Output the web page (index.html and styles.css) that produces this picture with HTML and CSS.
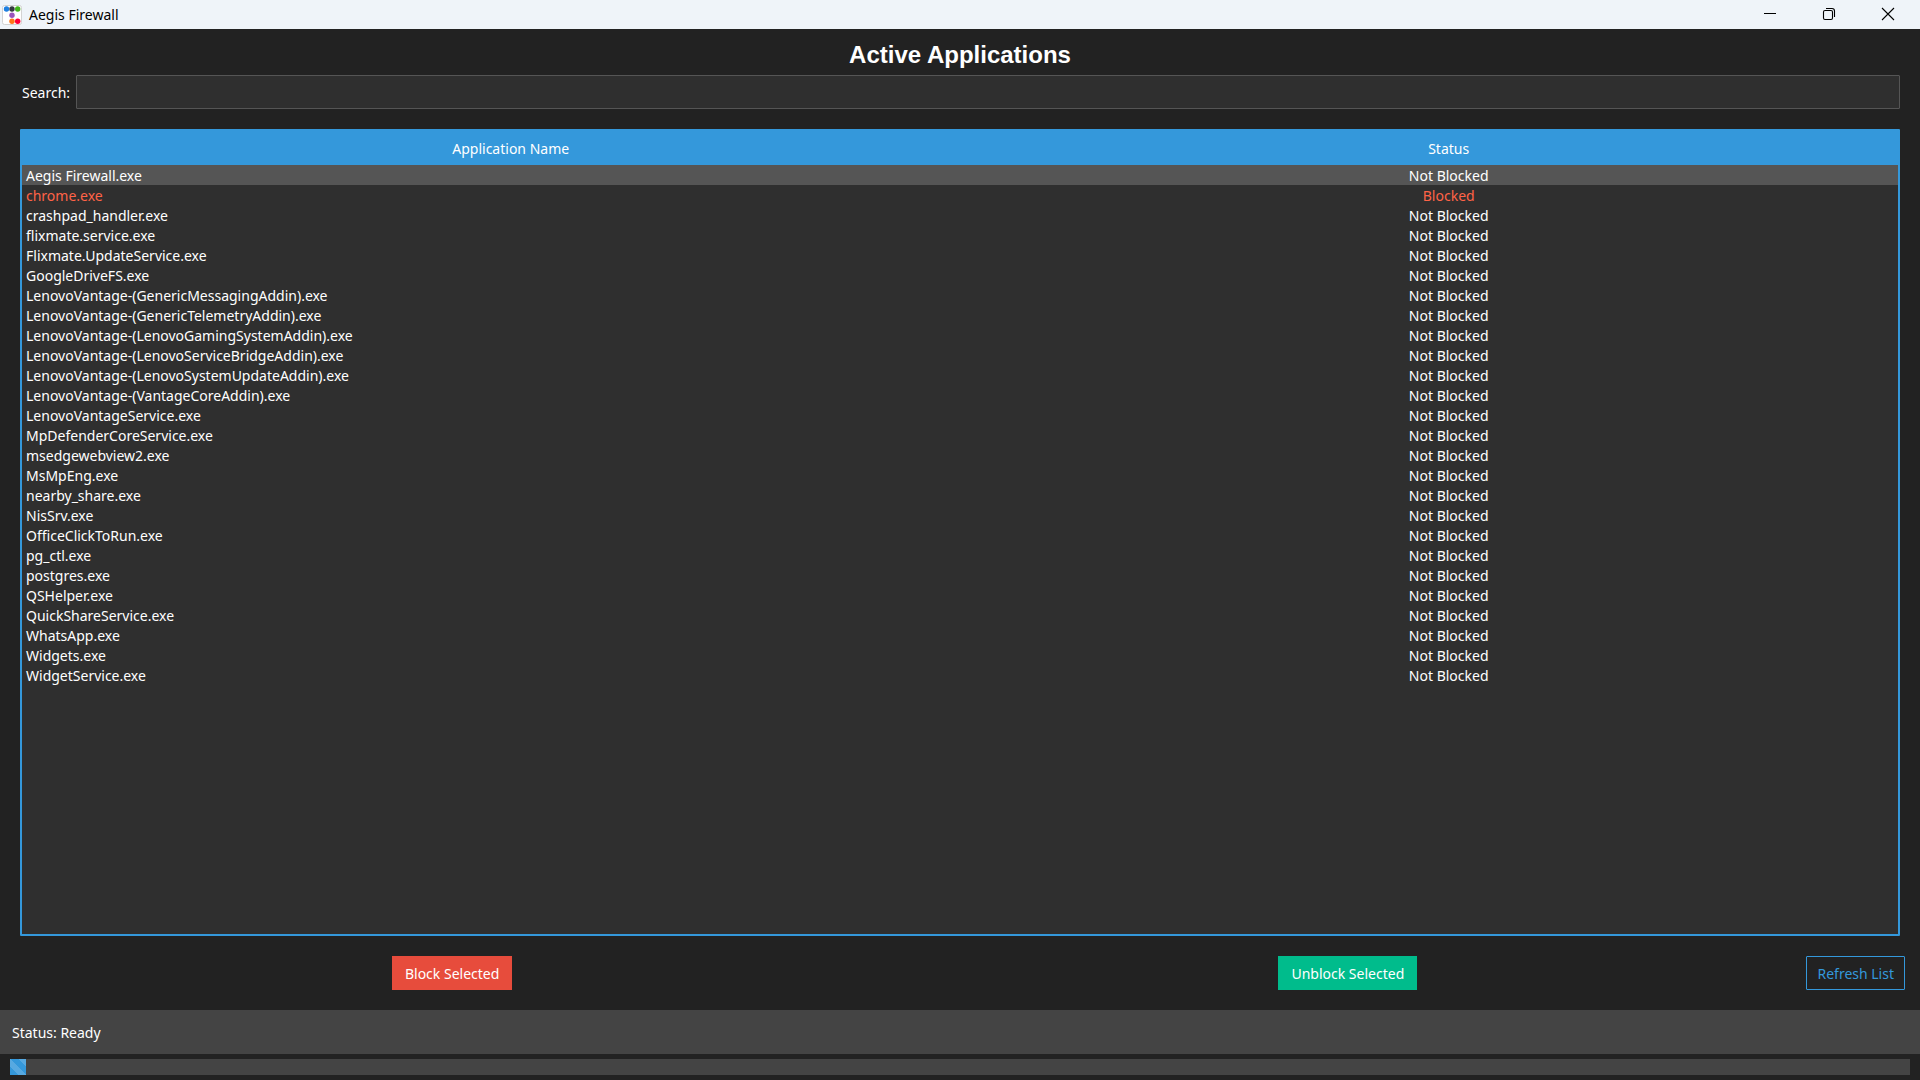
FILE: index.html
```html
<!DOCTYPE html>
<html lang="en">
<head>
<meta charset="utf-8">
<title>Aegis Firewall</title>
<link rel="stylesheet" href="styles.css">
</head>
<body>
<header class="titlebar">
  <svg class="app-icon" width="20" height="20" viewBox="0 0 20 20" aria-hidden="true">
    <rect x="0.5" y="0.5" width="19" height="19" rx="2" fill="#fff" stroke="#d3d3d3"/>
    <circle cx="4.5" cy="4" r="2.7" fill="#1e7fe0"/>
    <circle cx="10" cy="4" r="2.7" fill="#343a40"/>
    <circle cx="15.7" cy="4" r="2.7" fill="#3fb618"/>
    <circle cx="10" cy="10.2" r="2.7" fill="#9954bb"/>
    <circle cx="10" cy="16.3" r="2.7" fill="#ff7518"/>
    <circle cx="15.7" cy="16.3" r="2.7" fill="#ff0039"/>
  </svg>
  <span class="app-name">Aegis Firewall</span>
  <div class="window-controls">
    <button class="window-button" type="button" aria-label="Minimize">
      <svg width="14" height="14" viewBox="0 0 14 14"><path d="M1 6.5h12" stroke="#000" fill="none"/></svg>
    </button>
    <button class="window-button" type="button" aria-label="Restore">
      <svg width="14" height="14" viewBox="0 0 14 14"><g stroke="#000" stroke-width="1.1" fill="none"><rect x="1.5" y="3.5" width="9" height="9" rx="1.5"/><path d="M4 1.5h6a2.5 2.5 0 0 1 2.5 2.5v6"/></g></svg>
    </button>
    <button class="window-button" type="button" aria-label="Close">
      <svg width="14" height="14" viewBox="0 0 14 14"><path d="M1 1l12 12M13 1L1 13" stroke="#000" stroke-width="1.1" fill="none"/></svg>
    </button>
  </div>
</header>
<main class="content">
  <h1 class="title">Active Applications</h1>
  <div class="search">
    <label class="search-label" for="search">Search:</label>
    <input class="search-input" id="search" type="text">
  </div>
  <div class="list">
    <table class="apps">
      <colgroup><col class="col-name"><col class="col-status"></colgroup>
      <thead><tr><th>Application Name</th><th>Status</th></tr></thead>
      <tbody>
        <tr class="selected"><td>Aegis Firewall.exe</td><td>Not Blocked</td></tr>
        <tr class="blocked"><td>chrome.exe</td><td>Blocked</td></tr>
        <tr><td>crashpad_handler.exe</td><td>Not Blocked</td></tr>
        <tr><td>flixmate.service.exe</td><td>Not Blocked</td></tr>
        <tr><td>Flixmate.UpdateService.exe</td><td>Not Blocked</td></tr>
        <tr><td>GoogleDriveFS.exe</td><td>Not Blocked</td></tr>
        <tr><td>LenovoVantage-(GenericMessagingAddin).exe</td><td>Not Blocked</td></tr>
        <tr><td>LenovoVantage-(GenericTelemetryAddin).exe</td><td>Not Blocked</td></tr>
        <tr><td>LenovoVantage-(LenovoGamingSystemAddin).exe</td><td>Not Blocked</td></tr>
        <tr><td>LenovoVantage-(LenovoServiceBridgeAddin).exe</td><td>Not Blocked</td></tr>
        <tr><td>LenovoVantage-(LenovoSystemUpdateAddin).exe</td><td>Not Blocked</td></tr>
        <tr><td>LenovoVantage-(VantageCoreAddin).exe</td><td>Not Blocked</td></tr>
        <tr><td>LenovoVantageService.exe</td><td>Not Blocked</td></tr>
        <tr><td>MpDefenderCoreService.exe</td><td>Not Blocked</td></tr>
        <tr><td>msedgewebview2.exe</td><td>Not Blocked</td></tr>
        <tr><td>MsMpEng.exe</td><td>Not Blocked</td></tr>
        <tr><td>nearby_share.exe</td><td>Not Blocked</td></tr>
        <tr><td>NisSrv.exe</td><td>Not Blocked</td></tr>
        <tr><td>OfficeClickToRun.exe</td><td>Not Blocked</td></tr>
        <tr><td>pg_ctl.exe</td><td>Not Blocked</td></tr>
        <tr><td>postgres.exe</td><td>Not Blocked</td></tr>
        <tr><td>QSHelper.exe</td><td>Not Blocked</td></tr>
        <tr><td>QuickShareService.exe</td><td>Not Blocked</td></tr>
        <tr><td>WhatsApp.exe</td><td>Not Blocked</td></tr>
        <tr><td>Widgets.exe</td><td>Not Blocked</td></tr>
        <tr><td>WidgetService.exe</td><td>Not Blocked</td></tr>
      </tbody>
    </table>
  </div>
</main>
<div class="actions">
  <button class="button danger" type="button">Block Selected</button>
  <button class="button success" type="button">Unblock Selected</button>
  <button class="button outline" type="button">Refresh List</button>
</div>
<footer>
  <div class="status">Status: Ready</div>
  <div class="progress" role="progressbar" aria-label="Activity"><div class="progress-chunk"></div></div>
</footer>
</body>
</html>
```
FILE: styles.css
```css
* {
  box-sizing: border-box;
}

body {
  margin: 0;
  min-height: 100vh;
  display: flex;
  flex-direction: column;
  background: #222;
  color: #fff;
  font: 14px/18px "Noto Sans", "Open Sans", sans-serif;
}

button,
input {
  font: inherit;
}

.titlebar {
  display: flex;
  align-items: center;
  height: 29px;
  padding-left: 2px;
  background: #eff4f9;
  color: #000;
}

.app-icon {
  margin-right: 7px;
}

.window-controls {
  display: flex;
  align-self: stretch;
  margin-left: auto;
  padding-right: 2px;
}

.window-button {
  display: flex;
  align-items: center;
  justify-content: center;
  width: 59px;
  padding: 0 1px 1px 0;
  border: 0;
  background: none;
}

.content {
  flex: 1;
  display: flex;
  flex-direction: column;
  padding: 10px 20px 20px;
}

.title {
  margin: 0 0 4px;
  text-align: center;
  font: bold 24px/32px "Liberation Sans", Arial, sans-serif;
}

.search {
  display: flex;
  align-items: center;
  gap: 6px;
  margin-bottom: 20px;
  padding-left: 2px;
}

.search-label {
  padding-top: 2px;
}

.search-input {
  flex: 1;
  height: 34px;
  padding: 0 8px;
  border: 1px solid #555;
  border-radius: 1px;
  background: #2f2f2f;
  color: #fff;
  outline: 0;
}

.list {
  flex: 1;
  border: 2px solid #3498db;
  border-radius: 1px;
  background: #2f2f2f;
}

.apps {
  width: 100%;
  table-layout: fixed;
  border-collapse: collapse;
}

.col-name {
  width: 52.1%;
}

.col-status {
  width: 47.9%;
}

.apps th {
  height: 34px;
  padding: 2px 4px 0;
  background: #3498db;
  font-weight: normal;
}

.apps td {
  height: 20px;
  padding: 2px 4px 0;
}

.apps td + td {
  text-align: center;
}

.selected {
  background: #555;
}

.blocked {
  color: #ff6347;
}

.actions {
  display: grid;
  grid-template-columns: 488fr 512fr auto;
  justify-items: center;
  padding: 0 15px 20px;
}

.button {
  height: 34px;
  padding: 2px 12px 0;
  border: 1px solid;
  color: #fff;
}

.danger {
  border-color: #e74c3c;
  background: #e74c3c;
}

.success {
  border-color: #00bc8c;
  background: #00bc8c;
}

.outline {
  padding: 2px 10px 0;
  border-color: #3498db;
  border-radius: 1px;
  background: none;
  color: #3498db;
}

.status {
  padding: 14px 12px 12px;
  background: #444;
}

.progress {
  height: 16px;
  margin: 5px 10px;
  background: #444;
}

.progress-chunk {
  width: 16px;
  height: 16px;
  background: linear-gradient(45deg, #3498db 25%, #57a9e1 25% 50%, #3498db 50% 75%, #57a9e1 75%);
}
```
